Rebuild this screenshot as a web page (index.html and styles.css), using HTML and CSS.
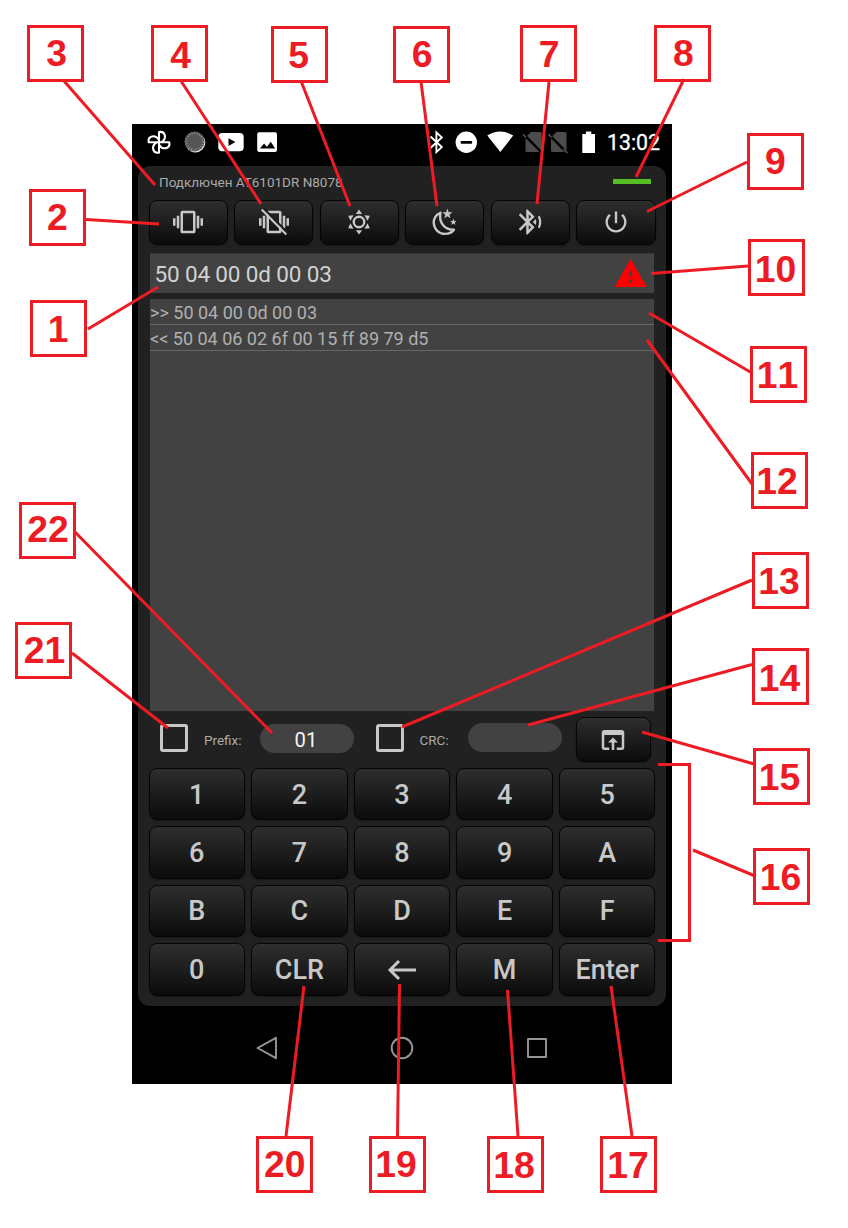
FILE: index.html
```html
<!DOCTYPE html>
<html lang="ru">
<head>
<meta charset="utf-8">
<title>AT6101DR</title>
<link rel="stylesheet" href="styles.css">
</head>
<body>
<div class="page">
<main class="phone">
  <header class="status">
    <svg class="st-left" width="140" height="28" viewBox="140 128 140 28">
      <g fill="none" stroke="#fff" stroke-width="2.1" stroke-linejoin="round">
        <path d="M159 142.300V132C165.500 130.800 167.200 138.500 161.500 142.300"/>
        <path d="M159 142.300V132C165.500 130.800 167.200 138.500 161.500 142.300" transform="rotate(90 159 142.300)"/>
        <path d="M159 142.300V132C165.500 130.800 167.200 138.500 161.500 142.300" transform="rotate(180 159 142.300)"/>
        <path d="M159 142.300V132C165.500 130.800 167.200 138.500 161.500 142.300" transform="rotate(270 159 142.300)"/>
      </g>
      <circle cx="195.300" cy="142.500" r="10" fill="#eee"/>
      <circle cx="194.500" cy="141.500" r="10" fill="#555"/>
      <circle cx="194.500" cy="141.500" r="8.400" fill="none" stroke="#8a8a8a" stroke-width="2.400" stroke-dasharray="1 1.600"/>
      <rect x="218.300" y="133" width="25.400" height="18.300" rx="4" fill="#fff"/>
      <path d="M228.500 138.300v7.600l6.800-3.800z"/>
      <rect x="257.200" y="132.300" width="19.800" height="19.800" rx="2" fill="#fff"/>
      <path d="M260 148.600l4-5 3 3.200 3.700-5 4.400 6.800z"/>
    </svg>
    <svg class="st-right" width="172" height="28" viewBox="426 128 172 28">
      <path d="M430.500 136.500l11.300 10.600-5.400 5V132.500l5.400 4.900-11.300 10.600" fill="none" stroke="#fff" stroke-width="1.900"/>
      <circle cx="466.300" cy="142.300" r="10.700" fill="#fff"/>
      <rect x="460.600" y="140.900" width="11.600" height="2.900" rx="1"/>
      <path d="M487.300 135.600Q500.200 127.500 513.200 135.600L500.300 152z" fill="#fff"/>
      <path d="M531 132h9.200q1.500 0 1.500 1.500v18.400H527q-1.500 0-1.500-1.500v-12.800z" fill="#4c4c4c"/><path d="M523.500 134.200l18.600 18.600" stroke="#000" stroke-width="2.500"/><path d="M523 134.200l3 3" stroke="#555" stroke-width="1.500"/>
      <path d="M556.500 132h8.500q1.500 0 1.500 1.500v18.400H552.500q-1.500 0-1.500-1.500v-12.800z" fill="#4c4c4c"/><path d="M548.500 134.200l18.600 18.600" stroke="#000" stroke-width="2.500"/><path d="M548.500 134.200l3 3M563.500 149l4 4" stroke="#555" stroke-width="1.500"/>
      <path d="M582.300 134h3.600v-2.600h5.400v2.600h3.700v19h-12.700z" fill="#fff"/>
    </svg>
    <span class="clock">13:02</span>
  </header>

  <section class="panel">
    <div class="info"><span class="device">Подключен AT6101DR N8078</span><i class="led"></i></div>

    <div class="tools">
      <button class="btn"><svg class="ico" viewBox="0 0 24 24"><path d="M0 15h2V9H0v6zm3 2h2V7H3v10zm19-8v6h2V9h-2zm-3 8h2V7h-2v10zM16.500 3h-9C6.670 3 6 3.670 6 4.500v15c0 .83.67 1.500 1.500 1.500h9c.83 0 1.500-.67 1.500-1.500v-15c0-.83-.67-1.500-1.500-1.500zM16 19H8V5h8v14z"/></svg></button>
      <button class="btn"><svg class="ico" viewBox="0 0 24 24"><path d="M0 15h2V9H0v6zm3 2h2V7H3v10zm19-8v6h2V9h-2zm-3 8h2V7h-2v10zM16.500 3h-9C6.670 3 6 3.670 6 4.500v15c0 .83.67 1.500 1.500 1.500h9c.83 0 1.500-.67 1.500-1.500v-15c0-.83-.67-1.500-1.500-1.500zM16 19H8V5h8v14z"/><path d="M3.800 1.200l20 20.400" stroke="#1c1c1c" stroke-width="1.800"/><path d="M2.200 2l19.600 20" stroke="#c8c8c8" stroke-width="1.700"/></svg></button>
      <button class="btn"><svg class="ico" viewBox="0 0 24 24"><circle cx="12" cy="12" r="4.200" fill="none" stroke="#c8c8c8" stroke-width="1.900"/><path d="M12 2l2.500 3.500h-5zM12 22l2.500-3.500h-5z"/><path d="M12 2l2.500 3.500h-5zM12 22l2.500-3.500h-5z" transform="rotate(60 12 12)"/><path d="M12 2l2.500 3.500h-5zM12 22l2.500-3.500h-5z" transform="rotate(120 12 12)"/></svg></button>
      <button class="btn"><svg class="ico" viewBox="0 0 24 24"><path d="M8.400 4.600C4.500 6.300 2.800 9.800 3 13c.5 5.300 4.400 8.500 9 8.500 3 0 5.700-1.300 7.200-3.300C11.600 18.300 6.800 12.400 8.400 4.600z" fill="none" stroke="#c8c8c8" stroke-width="1.900" stroke-linejoin="round"/><path d="M13.900 1.200l1 2.900 3 .1-2.400 1.900.9 2.900-2.500-1.700L11.400 9l.9-2.900-2.400-1.900 3-.1zM18.700 9.300l.7 1.800 1.900.1-1.500 1.200.5 1.900-1.600-1.100-1.600 1.100.5-1.900-1.500-1.200 1.900-.1z"/></svg></button>
      <button class="btn"><svg class="ico" viewBox="0 0 24 24"><path d="M14.240 12.010l2.320 2.320c.28-.72.44-1.510.44-2.330 0-.82-.16-1.590-.43-2.310l-2.330 2.320zm5.290-5.300l-1.260 1.260c.63 1.210.98 2.570.98 4.020s-.36 2.820-.98 4.020l1.200 1.200c.97-1.540 1.540-3.360 1.540-5.310-.01-1.890-.55-3.670-1.480-5.190zm-3.820 1L10 2H9v7.590L4.410 5 3 6.410 8.590 12 3 17.590 4.410 19 9 14.410V22h1l5.710-5.710-4.300-4.290 4.300-4.290zM11 5.830l1.880 1.880L11 9.590V5.830zm1.880 10.460L11 18.170v-3.760l1.880 1.880z"/></svg></button>
      <button class="btn"><svg class="ico ico-power" viewBox="0 0 24 24"><path d="M13 3h-2v10h2V3zm4.830 2.170l-1.420 1.420C17.990 7.860 19 9.810 19 12c0 3.870-3.130 7-7 7s-7-3.130-7-7c0-2.190 1.010-4.140 2.580-5.420L6.170 5.170C4.230 6.820 3 9.260 3 12c0 4.970 4.030 9 9 9s9-4.030 9-9c0-2.740-1.230-5.180-3.170-6.830z"/></svg></button>
    </div>

    <div class="command">
      <span>50 04 00 0d 00 03</span>
      <svg class="warn" viewBox="0 0 24 24"><path d="M1 21h22L12 2 1 21zm12-3h-2v-2h2v2zm0-4h-2v-4h2v4z"/></svg>
    </div>

    <div class="log">
      <div class="row">&gt;&gt; 50 04 00 0d 00 03</div>
      <div class="row">&lt;&lt; 50 04 06 02 6f 00 15 ff 89 79 d5</div>
    </div>

    <div class="options">
      <i class="check"></i><span class="label prefix">Prefix:</span><span class="pill">01</span>
      <i class="check second"></i><span class="label crc">CRC:</span><span class="pill empty"></span>
      <button class="btn open"><svg class="ico" viewBox="0 0 24 24"><path d="M19 4H5c-1.110 0-2 .9-2 2v12c0 1.100.89 2 2 2h4v-2H5V8h14v10h-4v2h4c1.100 0 2-.9 2-2V6c0-1.100-.89-2-2-2zm-7 6l-4 4h3v6h2v-6h3l-4-4z"/></svg></button>
    </div>

    <div class="keys">
      <button class="btn">1</button><button class="btn">2</button><button class="btn">3</button><button class="btn">4</button><button class="btn">5</button>
      <button class="btn">6</button><button class="btn">7</button><button class="btn">8</button><button class="btn">9</button><button class="btn">A</button>
      <button class="btn">B</button><button class="btn">C</button><button class="btn">D</button><button class="btn">E</button><button class="btn">F</button>
      <button class="btn">0</button><button class="btn">CLR</button><button class="btn"><svg width="30" height="22" viewBox="0 0 30 22"><path d="M29 11H3M12 2L3 11l9 9" fill="none" stroke="#c8c8c8" stroke-width="3"/></svg></button><button class="btn">M</button><button class="btn">Enter</button>
    </div>
  </section>

  <nav class="nav">
    <svg width="24" height="24" viewBox="0 0 24 24"><path d="M21 1.800v20.400L2.500 12z"/></svg>
    <svg width="24" height="24" viewBox="0 0 24 24"><circle cx="12" cy="12" r="10.300"/></svg>
    <svg width="24" height="24" viewBox="0 0 24 24"><rect x="3" y="3" width="18" height="18"/></svg>
  </nav>
</main>

<svg class="notes" width="848" height="1228" viewBox="0 0 848 1228">
  <g class="boxes">
    <rect x="31.500" y="301.500" width="54" height="54"/><rect x="30.500" y="190.500" width="54" height="54"/>
    <rect x="28.500" y="26.500" width="54" height="54"/><rect x="152.500" y="26.500" width="54" height="54"/>
    <rect x="272.500" y="27.500" width="54" height="54"/><rect x="394.500" y="27.500" width="54" height="54"/>
    <rect x="521.500" y="26.500" width="54" height="54"/><rect x="655.500" y="26.500" width="54" height="54"/>
    <rect x="748.500" y="134.500" width="54" height="54"/><rect x="749.500" y="240.500" width="54" height="54"/>
    <rect x="751.500" y="347.500" width="54" height="54"/><rect x="752.500" y="453.500" width="54" height="54"/>
    <rect x="753.500" y="553.500" width="54" height="54"/><rect x="753.500" y="649.500" width="54" height="54"/>
    <rect x="754.500" y="749.500" width="54" height="54"/><rect x="754.500" y="849.500" width="54" height="54"/>
    <rect x="601.500" y="1137.500" width="54" height="54"/><rect x="488.500" y="1137.500" width="54" height="54"/>
    <rect x="370.500" y="1137.500" width="54" height="54"/><rect x="257.500" y="1137.500" width="54" height="54"/>
    <rect x="16.500" y="623.500" width="54" height="54"/><rect x="20.500" y="503.500" width="54" height="54"/>
  </g>
  <g class="leads">
    <path d="M88 329L158 287M86 219.500L159 224M64 81L155 185M181 81L261 204M301 81L350 206M421 82L437 206M549 82L537 204M684 79L636 177M747 162L647 211.500M748 266L651 273.500M752 373L649 313M752 484L647 340M752 580L402 727M752 664.500L528 725M754 764L642 732M755 876L693 850M632 1136L611 986M518 1136L507.500 990M397.500 1136L399.500 984M286 1136L304 986M72 653L168 728M75 532L272 733"/>
    <path d="M658 764.500H689.500V940.500H658"/>
  </g>
  <g class="nums">
    <text x="58" y="342">1</text><text x="57.300" y="230">2</text><text x="56.700" y="66">3</text><text x="180.500" y="68">4</text>
    <text x="298.500" y="68">5</text><text x="422" y="67">6</text><text x="549" y="67">7</text><text x="683.300" y="66">8</text>
    <text x="775.300" y="174">9</text><text x="775.500" y="282">10</text><text class="eleven" x="777.500" y="388">11</text><text x="777" y="494">12</text>
    <text x="779" y="594">13</text><text x="779.500" y="691">14</text><text x="779.500" y="790">15</text><text x="780.500" y="890">16</text>
    <text x="628" y="1178">17</text><text x="514" y="1178">18</text><text x="396" y="1177">19</text><text x="284.700" y="1177">20</text>
    <text x="44.500" y="663">21</text><text x="48" y="542">22</text>
  </g>
</svg>
</div>
</body>
</html>
```
FILE: styles.css
```css
* { box-sizing: border-box; }
body { margin: 0; background: #fff; font-family: Roboto, sans-serif; }
.page { position: relative; width: 848px; height: 1228px; padding: 124px 0 0 132px; overflow: hidden; }
.phone { width: 540px; height: 960px; background: #000; display: flex; flex-direction: column; }
.status { flex: none; height: 42px; padding: 4px 0 0 8px; display: flex; align-items: flex-start; color: #fff; }
.st-right { margin-left: auto; }
.clock { width: 65px; margin-left: 9px; font-size: 21.300px; line-height: 29px; white-space: nowrap; -webkit-text-stroke: .3px #fff; }
.st-right, .st-left, .clock { flex: none; }

.panel { flex: none; width: 528px; height: 840px; margin: 0 6px; padding: 0 10.500px; border-radius: 12px; background: #212121; }
.info { height: 33.500px; padding: 0 4.500px 0 10.500px; display: flex; justify-content: space-between; align-items: flex-start; }
.device { font-size: 13.500px; line-height: 16px; padding-top: 7.500px; color: #aaa; white-space: nowrap; }
.led { width: 38px; height: 5px; margin-top: 13px; background: #55be22; }

.btn {
  display: flex; align-items: center; justify-content: center; min-width: 0; margin: 0; padding: 0;
  border: 1.500px solid #050505; border-radius: 8px; color: #c8c8c8;
  background: linear-gradient(#2e2e2e, #1d1d1d 50%, #0b0b0b);
  box-shadow: 0 1px 2px rgba(0, 0, 0, .3);
  font: 500 27px/30px Roboto, sans-serif;
}
.ico { width: 30px; height: 30px; fill: #c8c8c8; flex: none; }
.ico-power { width: 28px; height: 28px; }
.tools { display: grid; grid-template-columns: repeat(6, 1fr); gap: 6.500px; height: 45px; }

.command { height: 40px; margin: 8.500px 1.500px 0; padding: 1px 6px 0 4.500px; display: flex; justify-content: space-between; align-items: center; background: #424242; border-top: 1px solid #363636; color: #d2d2d2; font-size: 22.500px; letter-spacing: -.15px; }
.warn { width: 35.300px; height: 35.300px; margin-top: -1px; fill: #f00; }
.log { height: 412px; margin: 6px 1.500px 0; background: #424242; }
.row { height: 26px; padding-top: 1px; border-bottom: 1px solid #666; color: #b0b0b0; font-size: 18px; line-height: 25px; white-space: nowrap; }

.options { height: 57px; padding: 6px 5px 0 11.500px; display: flex; align-items: flex-start; }
.check { flex: none; width: 28px; height: 28px; margin-top: 6.500px; border: 3px solid #c8c8c8; border-radius: 3px; }
.label { color: #aaa; font-size: 13.500px; line-height: 16px; margin-top: 15px; }
.prefix { width: 56px; margin-left: 16px; }
.pill { flex: none; width: 94px; height: 29px; margin-top: 7px; padding-right: 2px; border-radius: 15px; background: #424242; color: #f5f5f5; text-align: center; font-size: 20.250px; line-height: 32px; }
.second { margin-left: 22px; }
.crc { width: 48px; margin-left: 15.500px; }
.empty { margin-top: 6px; }
.open { width: 75px; height: 45px; margin-left: auto; }
.keys { display: grid; grid-template-columns: repeat(5, 1fr); grid-auto-rows: 52.400px; gap: 6px; }
.keys .btn { padding-top: 1px; }

.nav { flex: none; height: 78px; padding: 30px 123px 0; display: flex; align-items: flex-start; justify-content: space-between; }
.nav svg { fill: none; stroke: #969696; stroke-width: 1.900; stroke-linejoin: round; }

.notes { position: absolute; left: 0; top: 0; pointer-events: none; }
.leads { fill: none; stroke: #ed1c24; stroke-width: 3; }
.boxes { fill: #fff; stroke: #ed1c24; stroke-width: 3; }
.nums { fill: #ed1c24; font: bold 37.300px "Liberation Sans", Arial, sans-serif; text-anchor: middle; }
.eleven { font-kerning: none; }
```
